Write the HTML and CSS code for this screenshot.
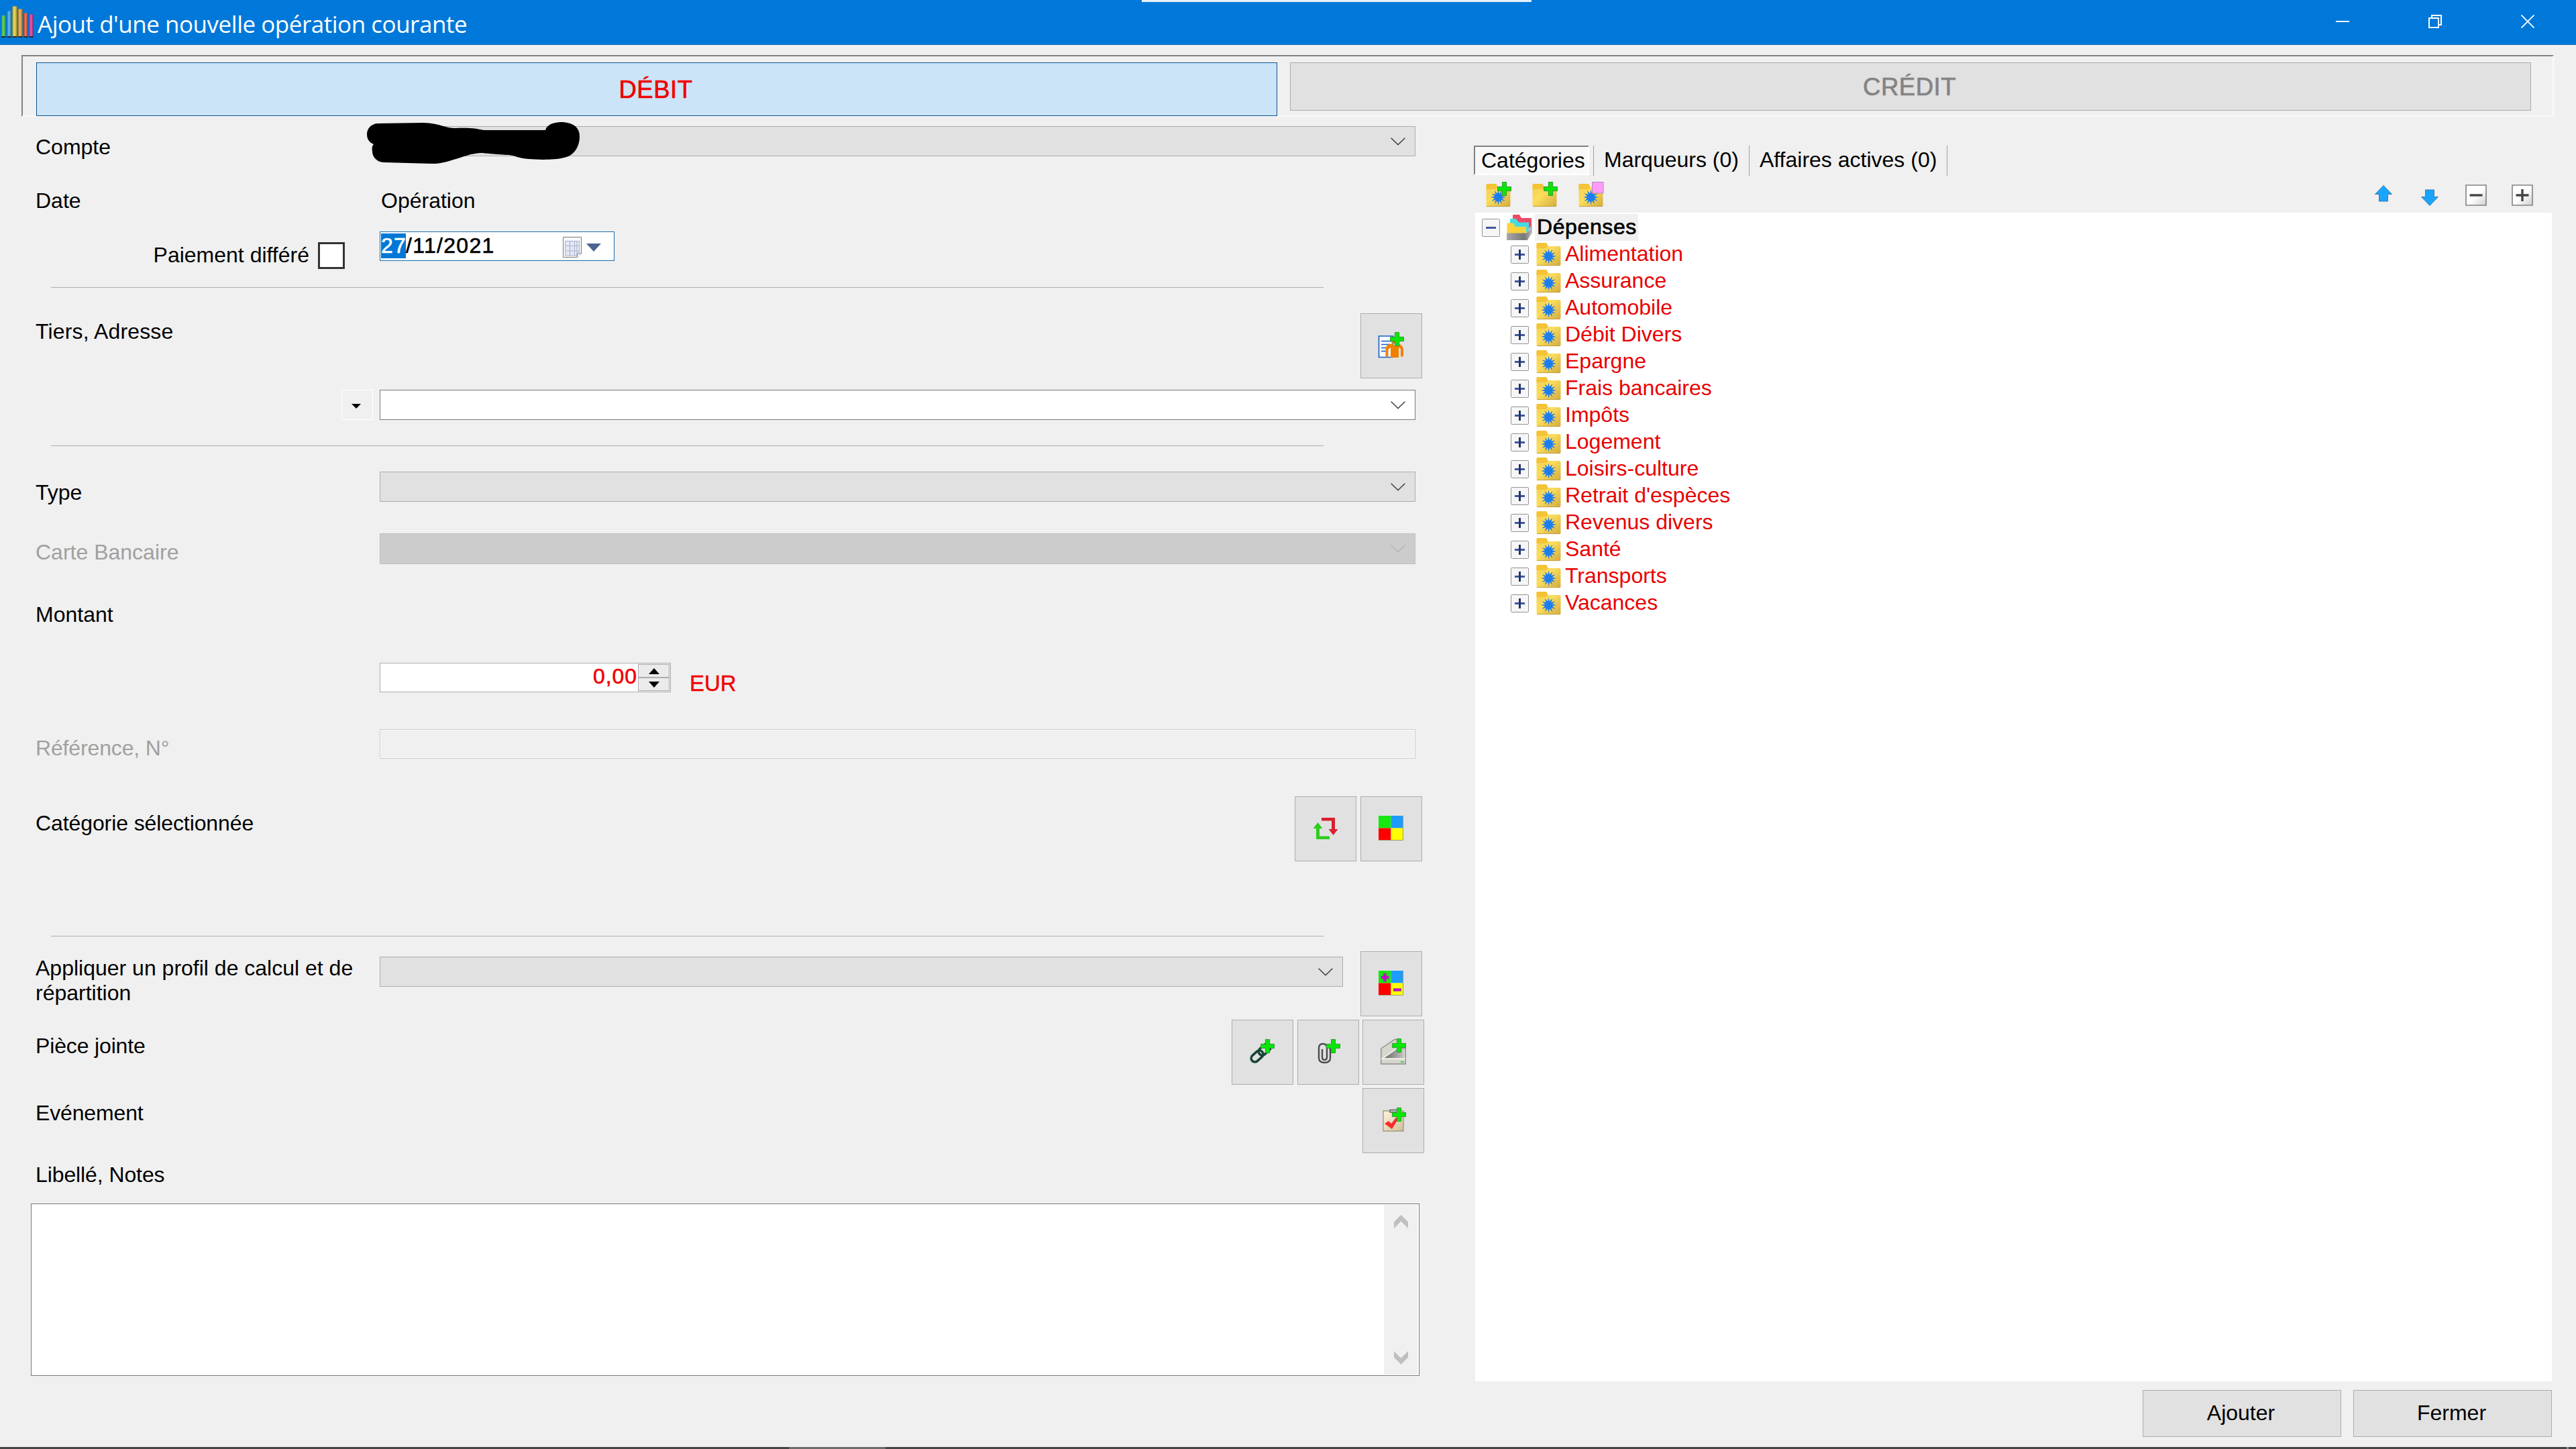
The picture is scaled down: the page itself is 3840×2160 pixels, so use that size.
FILE: index.html
```html
<!DOCTYPE html>
<html lang="fr">
<head>
    <meta charset="UTF-8">
    <meta name="viewport" content="width=device-width, initial-scale=1.0">
    <title>Ajout d'une nouvelle opération courante</title>
    <link rel="stylesheet" href="styles.css">
</head>
<body>
    <!-- Icônes réutilisées -->
    <svg class="defs" width="0" height="0">
        <defs>
            <linearGradient id="gFolder" x1="0" y1="0" x2="1" y2="1">
                <stop offset="0" stop-color="#f3cf52"/>
                <stop offset="0.45" stop-color="#fbdc5c"/>
                <stop offset="1" stop-color="#d2ab3f"/>
            </linearGradient>
            <linearGradient id="gBox" x1="0" y1="0" x2="1" y2="1">
                <stop offset="0.5" stop-color="#ffffff"/>
                <stop offset="1" stop-color="#cfcfcf"/>
            </linearGradient>
            <linearGradient id="gTray" x1="0" y1="0" x2="1" y2="0">
                <stop offset="0" stop-color="#a8a8a8"/>
                <stop offset="0.7" stop-color="#777777"/>
                <stop offset="1" stop-color="#b5b5b5"/>
            </linearGradient>
            <linearGradient id="gNote" x1="0" y1="0" x2="1" y2="1">
                <stop offset="0" stop-color="#fff3dc"/>
                <stop offset="1" stop-color="#cfc09c"/>
            </linearGradient>
            <linearGradient id="gScan" x1="0" y1="0" x2="1" y2="0">
                <stop offset="0" stop-color="#6a6864"/>
                <stop offset="1" stop-color="#c4c4c4"/>
            </linearGradient>
            <linearGradient id="gBar" x1="0" y1="0" x2="1" y2="0">
                <stop offset="0" stop-color="#000" stop-opacity="0.3"/>
                <stop offset="0.4" stop-color="#fff" stop-opacity="0.2"/>
                <stop offset="1" stop-color="#000" stop-opacity="0.4"/>
            </linearGradient>
        </defs>
        <symbol id="chevron" viewBox="0 0 22 12">
            <path d="M0.7 0.7 L11 10.7 L21.3 0.7" fill="none" stroke="currentColor" stroke-width="1.5"/>
        </symbol>
        <symbol id="star" viewBox="0 0 24 24">
            <path d="M12 0 L13.5 6.3 L18 1.6 L16.100 7.900 L22.4 6 L17.700 10.500 L24 12 L17.700 13.500 L22.4 18 L16.100 16.100 L18 22.4 L13.5 17.700 L12 24 L10.5 17.700 L6 22.4 L7.900 16.100 L1.6 18 L6.300 13.500 L0 12 L6.300 10.500 L1.6 6 L7.900 7.900 L6 1.6 L10.5 6.3 Z" fill="#1c7df0"/>
        </symbol>
        <symbol id="folder" viewBox="0 0 37 36">
            <path d="M0.5 3 Q0.5 1 2.5 1 H14 Q15.5 1 16 2.5 L17.5 6 H34.5 Q36.5 6 36.5 8 V33 Q36.5 35 34.5 35 H2.5 Q0.5 35 0.5 33 Z" fill="url(#gFolder)"/>
            <path d="M0.5 9 V3 Q0.5 1 2.5 1 H14 Q15.5 1 16 2.5 L17.5 6 L15 9 Z" fill="#f4c336"/>
            <path d="M1 34.6 H36" stroke="#c29c36" stroke-width="1"/>
        </symbol>
        <symbol id="folder-star" viewBox="0 0 37 36">
            <use href="#folder" width="37" height="36"/>
            <use href="#star" x="7" y="9.5" width="23" height="23"/>
        </symbol>
        <symbol id="plus-green" viewBox="0 0 21 21">
            <path d="M7.4 0.5 H13.6 V7.4 H20.5 V13.6 H13.6 V20.5 H7.4 V13.6 H0.5 V7.4 H7.4 Z" fill="#0ae60a" stroke="#2f9a2f" stroke-width="1"/>
        </symbol>
        <symbol id="squares" viewBox="0 0 37 37">
            <path fill="#17e80f" d="M0 0h18.5v18.5H0z"/>
            <path fill="#1e9bff" d="M18.5 0H36v18.5H18.5z"/>
            <path fill="#ff0000" d="M0 18.5h18.5V36H0z"/>
            <path fill="#ffff00" d="M18.5 18.5H36V36H18.5z"/>
            <path d="M0 36.5 H36.5 V0" fill="none" stroke="#9a9a78" stroke-width="1"/>
        </symbol>
        <symbol id="node-plus" viewBox="0 0 27 27">
            <rect x="0.5" y="0.5" width="26" height="26" rx="1" fill="#f6f6f6" stroke="#929292"/>
            <path d="M6 13.5 H21" stroke="#4059a0" stroke-width="3"/>
            <path d="M13.5 6 V21" stroke="#1f3668" stroke-width="3"/>
        </symbol>
        <symbol id="node-minus" viewBox="0 0 27 27">
            <rect x="0.5" y="0.5" width="26" height="26" rx="1" fill="#f6f6f6" stroke="#929292"/>
            <path d="M6 13.5 H21" stroke="#4059a0" stroke-width="3"/>
        </symbol>
    </svg>

    <div class="window">
        <header class="titlebar">
            <svg class="app-icon" width="50" height="50" viewBox="0 0 50 50">
                <path d="M2 15h7v31H2z" fill="#3cc442"/>
                <path d="M10.500 8.500h6.500v37.500h-6.500z" fill="#34a8ea"/>
                <path d="M18.500 1.500h7v44.500h-7z" fill="#ecd030"/>
                <path d="M27 5.500h6.500v40.500H27z" fill="#f8a024"/>
                <path d="M35.500 11.500H41.500v34.500h-6z" fill="#ee5230"/>
                <path d="M43.500 13.500h6v32.500h-6z" fill="#e0309c"/>
                <path d="M2 15h7v31H2z" fill="url(#gBar)"/>
                <path d="M10.500 8.500h6.500v37.500h-6.500z" fill="url(#gBar)"/>
                <path d="M18.500 1.500h7v44.500h-7z" fill="url(#gBar)"/>
                <path d="M27 5.500h6.500v40.500H27z" fill="url(#gBar)"/>
                <path d="M35.500 11.500H41.500v34.500h-6z" fill="url(#gBar)"/>
                <path d="M43.500 13.500h6v32.500h-6z" fill="url(#gBar)"/>
                <path d="M2 47h7M10.500 47h6.500M18.500 47h7M27 47h6.500M35.500 47h6M43.500 47h6" stroke="#2a2a2a" stroke-width="2"/>
            </svg>
            <h1 class="title">Ajout d'une nouvelle opération courante</h1>
            <span class="top-strip"></span>
            <div class="window-controls">
                <svg width="20" height="20" viewBox="0 0 20 20"><path d="M0 10h20" stroke="#fff" stroke-width="2"/></svg>
                <svg width="20" height="20" viewBox="0 0 20 20"><path d="M1 5h14v14H1z M5 5V1h14v14h-4" fill="none" stroke="#fff" stroke-width="2"/></svg>
                <svg width="20" height="20" viewBox="0 0 20 20"><path d="M0.500 0.500L19.500 19.500M19.500 0.500L0.500 19.500" stroke="#fff" stroke-width="1.800"/></svg>
            </div>
        </header>

        <nav class="mode">
            <button class="mode-btn debit">DÉBIT</button>
            <button class="mode-btn credit">CRÉDIT</button>
        </nav>

        <main class="content">
            <form class="form">
                <div class="row row-compte">
                    <label class="label">Compte</label>
                    <div class="combo">
                        <svg class="chevron"><use href="#chevron"/></svg>
                        <svg class="scribble" width="320" height="66" viewBox="545 180 320 66">
                            <path d="M547 200 C547 192 553 184 564 184 L631 183 C655 184 662 190 676 191 C700 190 708 191 721 194 L813 194 C816 184 828 182 839 182 C855 183 864 190 864 203 C864 220 855 232 841 235 C825 239 800 238 788 237 C773 236 768 232 759 231 C740 230 730 229 719 228 C702 228 688 235 676 238 C663 242 655 244 644 244 L571 242 C560 241 555 232 555 226 C554 220 555 217 557 215 C550 212 547 207 547 200 Z" fill="#000"/>
                        </svg>
                    </div>
                </div>

                <div class="row row-date">
                    <label class="label">Date</label>
                    <label class="label operation">Opération</label>
                </div>
                <div class="row row-differe">
                    <div class="differe">
                        <label class="label">Paiement différé</label>
                        <span class="checkbox"></span>
                    </div>
                    <div class="date-input">
                        <span class="selected">27</span><span>/11/2021</span>
                        <svg class="calendar" width="28" height="32" viewBox="0 0 28 32">
                            <path d="M0.500 0.500H27.500V25L21.500 30.500H0.500Z" fill="#f7f8fb" stroke="#7c7c80"/>
                            <path d="M3 6h22v19l-4 3H3z" fill="#e3e8f4"/>
                            <path d="M3.500 6.500h21v14.500h-21zM3.500 13.500h21M3.500 21v7H21V6.500M10.500 6.500V28M17.500 6.500V28M24.500 21v3" fill="none" stroke="#a9b3cc"/>
                            <path d="M21.500 30.500V25H27.500" fill="#fff" stroke="#7c7c80"/>
                        </svg>
                        <svg class="date-arrow" width="22" height="12" viewBox="0 0 22 12"><path d="M0 0H22L11 12Z" fill="#4d6290"/></svg>
                    </div>
                </div>
                <hr class="rule">

                <div class="row row-tiers">
                    <label class="label">Tiers, Adresse</label>
                    <div class="buttons inset">
                        <button type="button" class="icon-btn">
                            <svg width="40" height="40" viewBox="0 0 40 40">
                                <path d="M1.500 6h21v31.500h-21z" fill="#f8fbff" stroke="#1560c8" stroke-width="1.600"/>
                                <path d="M5 13.500h15M5 18.500h13M5 23.500h9M5 28.500h8" stroke="#1560c8" stroke-width="1.400"/>
                                <circle cx="24" cy="12" r="5" fill="#d97800"/>
                                <path d="M17 17.500h5l2.500 3 2.500-3h5q6 3 6 9v10h-4V25l-3-2v15H19V23l-3.500 3v10.500h-4V26q0-6 5.500-8.500z" fill="#f08000"/>
                                <use href="#plus-green" x="18" y="0" width="21" height="21"/>
                            </svg>
                        </button>
                    </div>
                </div>
                <div class="row row-tiers-select">
                    <span class="mini-drop"><svg width="14" height="7" viewBox="0 0 14 7"><path d="M0 0H14L7 7Z"/></svg></span>
                    <div class="combo editable"><svg class="chevron"><use href="#chevron"/></svg></div>
                </div>
                <hr class="rule">

                <div class="row row-type">
                    <label class="label">Type</label>
                    <div class="combo"><svg class="chevron"><use href="#chevron"/></svg></div>
                </div>
                <div class="row row-carte">
                    <label class="label disabled">Carte Bancaire</label>
                    <div class="combo disabled"><svg class="chevron"><use href="#chevron"/></svg></div>
                </div>
                <div class="row row-montant">
                    <label class="label">Montant</label>
                </div>
                <div class="row row-amount">
                    <div class="amount">
                        <div class="number">
                            <span class="value">0,00</span>
                            <div class="spinner">
                                <span><svg width="16" height="9" viewBox="0 0 16 9"><path d="M8 0L16 9H0Z"/></svg></span>
                                <span><svg width="16" height="9" viewBox="0 0 16 9"><path d="M8 9L16 0H0Z"/></svg></span>
                            </div>
                        </div>
                        <span class="currency">EUR</span>
                    </div>
                </div>
                <div class="row row-ref">
                    <label class="label disabled">Référence, N°</label>
                    <div class="text-disabled"></div>
                </div>
                <div class="row row-categorie">
                    <label class="label">Catégorie sélectionnée</label>
                    <div class="buttons inset">
                        <button type="button" class="icon-btn">
                            <svg width="38" height="34" viewBox="0 0 38 34">
                                <path d="M13 1H33V18H37.500L30.500 27L23.500 18H28V5.500H13Z" fill="#d9202e"/>
                                <path d="M25 33H5V17H0.500L7.500 8L14.500 17H10V28.500H25Z" fill="#2ecb1e"/>
                            </svg>
                        </button>
                        <button type="button" class="icon-btn"><svg width="37" height="37"><use href="#squares"/></svg></button>
                    </div>
                </div>
                <hr class="rule">

                <div class="row row-profil">
                    <label class="label">Appliquer un profil de calcul et de répartition</label>
                    <div class="profil">
                        <div class="combo short"><svg class="chevron"><use href="#chevron"/></svg></div>
                        <button type="button" class="icon-btn">
                            <svg width="37" height="37" viewBox="0 0 37 37">
                                <use href="#squares" width="37" height="37"/>
                                <path d="M3.500 10h12M9.500 3.500v13M22 28.500h12" stroke="#8a4a7c" stroke-width="4.600"/>
                                <path d="M4.500 10h10M9.500 4.500v11M23 28.500h10" stroke="#c800d8" stroke-width="3"/>
                            </svg>
                        </button>
                    </div>
                </div>
                <div class="row row-piece">
                    <label class="label">Pièce jointe</label>
                    <div class="buttons">
                        <button type="button" class="icon-btn">
                            <svg width="38" height="38" viewBox="0 0 38 38">
                                <g fill="none" stroke="#184438" stroke-width="3.600">
                                    <rect x="1" y="20" width="20" height="11" rx="5.500" transform="rotate(-42 11 25.500)"/>
                                    <rect x="12" y="10" width="20" height="11" rx="5.500" transform="rotate(-42 22 15.500)"/>
                                </g>
                                <use href="#plus-green" x="16" y="0" width="21" height="21"/>
                            </svg>
                        </button>
                        <button type="button" class="icon-btn">
                            <svg width="38" height="38" viewBox="0 0 38 38">
                                <path d="M10 16v12q0 4 3.500 4t3.500-4V14q0-6-6-6t-6 6v15q0 7 8.500 7t8.500-7V12" transform="translate(0 -1)" fill="none" stroke="#4c4c4e" stroke-width="2.400"/>
                                <use href="#plus-green" x="16" y="0" width="21" height="21"/>
                            </svg>
                        </button>
                        <button type="button" class="icon-btn last">
                            <svg width="38" height="39" viewBox="0 0 38 39">
                                <path d="M0.700 15L21 1.500L27 1.500V14.500H37.300V38H0.700Z" fill="#d6d6cc" stroke="#8d8d8d" stroke-width="1.400"/>
                                <path d="M6 29L25 15.500H34.500V29Z" fill="url(#gScan)"/>
                                <path d="M1 31L25 14" stroke="#f2f2ee" stroke-width="1.500"/>
                                <path d="M1 30.500H37" stroke="#eeeee8" stroke-width="2"/>
                                <path d="M30 35h4.500" stroke="#2fd93c" stroke-width="2"/>
                                <use href="#plus-green" x="17" y="0" width="21" height="21"/>
                            </svg>
                        </button>
                    </div>
                </div>
                <div class="row row-evenement">
                    <label class="label">Evénement</label>
                    <div class="buttons">
                        <button type="button" class="icon-btn">
                            <svg width="38" height="38" viewBox="0 0 38 38">
                                <path d="M4 5h30v30H4z" fill="url(#gNote)" stroke="#a39a7e" stroke-width="1.400"/>
                                <path d="M14 3.500h12v3.500H14z" fill="#c9ccd2" stroke="#5c5f66" stroke-width="1.400"/>
                                <path d="M6 24l6-4 4 4 7-9 5-1-11 18z" fill="#fb2a2a"/>
                                <use href="#plus-green" x="17" y="0" width="21" height="21"/>
                            </svg>
                        </button>
                    </div>
                </div>
                <label class="label notes-label">Libellé, Notes</label>
                <div class="notes">
                    <div class="scrollbar">
                        <svg width="21" height="20" viewBox="0 0 21 20"><path d="M10.500 0L21 10.500V20L10.500 9.500L0 20V10.500Z" fill="#bfbfbf"/></svg>
                        <svg width="21" height="20" viewBox="0 0 21 20"><path d="M10.500 20L21 9.500V0L10.500 10.500L0 0V9.500Z" fill="#bfbfbf"/></svg>
                    </div>
                </div>
            </form>

            <aside class="side">
                <div class="tabs">
                    <span class="tab active">Catégories</span>
                    <span class="tab">Marqueurs (0)</span>
                    <span class="tab">Affaires actives (0)</span>
                </div>
                <div class="toolbar">
                    <svg width="39" height="39" viewBox="0 0 39 39">
                        <use href="#folder-star" x="0" y="2" width="37" height="36"/>
                        <use href="#plus-green" x="17" y="0" width="21" height="21"/>
                    </svg>
                    <svg width="39" height="39" viewBox="0 0 39 39">
                        <use href="#folder" x="0" y="2" width="37" height="36"/>
                        <use href="#plus-green" x="17" y="0" width="21" height="21"/>
                    </svg>
                    <svg width="39" height="39" viewBox="0 0 39 39">
                        <use href="#folder-star" x="0" y="2" width="37" height="36"/>
                        <path d="M20.500 0.500h16.500v16.500H20.500z" fill="#ff9bfb" stroke="#b684b4"/>
                    </svg>
                    <div class="toolbar-right">
                        <svg width="32" height="32" viewBox="0 0 32 32"><path d="M16 1.500L28.500 14.500H22.500V25H9.500V14.500H3.500Z" fill="#1ba4fb" stroke="#3a7fae"/></svg>
                        <svg width="32" height="32" viewBox="0 0 32 32"><path d="M16 31.500L28.500 18.500H22.500V8H9.500V18.500H3.500Z" fill="#1ba4fb" stroke="#3a7fae"/></svg>
                        <svg width="32" height="32" viewBox="0 0 32 32"><path d="M1 1h30v30H1z" fill="url(#gBox)" stroke="#828282" stroke-width="1.600"/><path d="M6.500 16h19" stroke="#444" stroke-width="3.400"/></svg>
                        <svg width="32" height="32" viewBox="0 0 32 32"><path d="M1 1h30v30H1z" fill="url(#gBox)" stroke="#828282" stroke-width="1.600"/><path d="M6.500 16h19M16 7v18" stroke="#444" stroke-width="3.400"/></svg>
                    </div>
                </div>
                <div class="tree">
                    <div class="node root">
                        <svg class="toggle"><use href="#node-minus"/></svg>
                        <svg class="root-icon" width="38" height="38" viewBox="0 0 38 38">
                            <path d="M9 5V1Q9 0 10 0H19L22 5H37V20H14Z" fill="#ee4a68"/>
                            <path d="M5 13V7Q5 6 6 6H14L18 11.500H33V26H5Z" fill="#45dbe2"/>
                            <path d="M29 28L38 14V27L31 38H26Z" fill="#b9b9b9"/>
                            <path d="M0.500 28V14Q0.500 12.500 2 12.500H10L13 18H29V28Z" fill="#fbd23c"/>
                            <path d="M0 27.500H29L37.500 22L31 38H0Z" fill="url(#gTray)"/>
                        </svg>
                        <span class="name">Dépenses</span>
                    </div>
                    <div class="node"><svg class="toggle"><use href="#node-plus"/></svg><svg class="folder"><use href="#folder-star"/></svg><span class="name">Alimentation</span></div>
                    <div class="node"><svg class="toggle"><use href="#node-plus"/></svg><svg class="folder"><use href="#folder-star"/></svg><span class="name">Assurance</span></div>
                    <div class="node"><svg class="toggle"><use href="#node-plus"/></svg><svg class="folder"><use href="#folder-star"/></svg><span class="name">Automobile</span></div>
                    <div class="node"><svg class="toggle"><use href="#node-plus"/></svg><svg class="folder"><use href="#folder-star"/></svg><span class="name">Débit Divers</span></div>
                    <div class="node"><svg class="toggle"><use href="#node-plus"/></svg><svg class="folder"><use href="#folder-star"/></svg><span class="name">Epargne</span></div>
                    <div class="node"><svg class="toggle"><use href="#node-plus"/></svg><svg class="folder"><use href="#folder-star"/></svg><span class="name">Frais bancaires</span></div>
                    <div class="node"><svg class="toggle"><use href="#node-plus"/></svg><svg class="folder"><use href="#folder-star"/></svg><span class="name">Impôts</span></div>
                    <div class="node"><svg class="toggle"><use href="#node-plus"/></svg><svg class="folder"><use href="#folder-star"/></svg><span class="name">Logement</span></div>
                    <div class="node"><svg class="toggle"><use href="#node-plus"/></svg><svg class="folder"><use href="#folder-star"/></svg><span class="name">Loisirs-culture</span></div>
                    <div class="node"><svg class="toggle"><use href="#node-plus"/></svg><svg class="folder"><use href="#folder-star"/></svg><span class="name">Retrait d'espèces</span></div>
                    <div class="node"><svg class="toggle"><use href="#node-plus"/></svg><svg class="folder"><use href="#folder-star"/></svg><span class="name">Revenus divers</span></div>
                    <div class="node"><svg class="toggle"><use href="#node-plus"/></svg><svg class="folder"><use href="#folder-star"/></svg><span class="name">Santé</span></div>
                    <div class="node"><svg class="toggle"><use href="#node-plus"/></svg><svg class="folder"><use href="#folder-star"/></svg><span class="name">Transports</span></div>
                    <div class="node"><svg class="toggle"><use href="#node-plus"/></svg><svg class="folder"><use href="#folder-star"/></svg><span class="name">Vacances</span></div>
                </div>
                <div class="actions">
                    <button class="action-btn">Ajouter</button>
                    <button class="action-btn">Fermer</button>
                </div>
            </aside>
        </main>

        <footer class="taskbar"><span class="task"></span><span class="tick"></span></footer>
    </div>
</body>
</html>
```

FILE: styles.css
```css
* {
    box-sizing: border-box;
}

body {
    margin: 0;
    background-color: #f0f0f0;
    color: #000;
    font-family: "Liberation Sans", Arial, sans-serif;
    font-size: 32px;
    line-height: 37px;
}

button {
    font-family: inherit;
    font-size: inherit;
    line-height: inherit;
    color: inherit;
    padding: 0;
    border: 1px solid #adadad;
    border-radius: 0;
    background-color: #e1e1e1;
}

svg {
    display: block;
    flex: none;
}

.defs {
    position: absolute;
}

.window {
    width: 3840px;
    height: 2160px;
    display: flex;
    flex-direction: column;
    overflow: hidden;
}

/* Barre de titre */
.titlebar {
    position: relative;
    display: flex;
    align-items: center;
    height: 67px;
    flex: none;
    background-color: #0078d9;
    border-bottom: 1px solid #196eb4;
    color: #fff;
}

.app-icon {
    margin-top: -1px;
}

.title {
    margin: 5px 0 0 6px;
    font-family: "Open Sans", "Noto Sans", sans-serif;
    font-size: 35px;
    font-weight: 400;
    line-height: 48px;
    letter-spacing: -0.480px;
    white-space: nowrap;
}

.top-strip {
    position: absolute;
    top: 0;
    left: 1702px;
    width: 581px;
    height: 3px;
    background-color: #e8f1f8;
}

.window-controls {
    display: flex;
    gap: 118px;
    margin: -3px 62px 0 auto;
}

/* Débit / Crédit */
.mode {
    display: flex;
    align-items: flex-start;
    gap: 19px;
    flex: none;
    height: 92px;
    margin: 15px 33px 0 32px;
    padding: 9px 0 0 20px;
    border: 2px solid;
    border-color: #838383 #fafafa #fafafa #838383;
}

.mode-btn {
    width: 1850px;
    height: 74px;
    padding-right: 3px;
    font-size: 36.500px;
    letter-spacing: 0.500px;
    -webkit-text-stroke: 0.700px currentColor;
}

.mode-btn.debit {
    height: 80px;
    border-color: #0a5290;
    background-color: #cce4f7;
    color: #f00000;
    margin-bottom: -4px;
}

.mode-btn.credit {
    height: 72px;
    color: #838383;
}

.content {
    display: flex;
    flex: 1;
    min-height: 0;
}

/* Formulaire */
.form {
    width: 2197px;
    flex: none;
    padding-left: 53px;
}

.row {
    display: grid;
    grid-template-columns: 513px 1557px;
    align-items: start;
}

.label {
    display: block;
}

.label.disabled {
    color: #a0a0a0;
}

.rule {
    width: 1897px;
    height: 1px;
    margin: 0 0 0 23px;
    border: none;
    background-color: #adadad;
}

.combo {
    position: relative;
    display: flex;
    align-items: center;
    justify-content: flex-end;
    width: 1544px;
    height: 45px;
    padding-right: 14px;
    border: 1px solid #adadad;
    background-color: #e1e1e1;
    color: #3c3c3c;
}

.combo.editable {
    border-color: #7a7a7a;
    background-color: #fff;
}

.combo.disabled {
    height: 46px;
    margin-top: 1px;
    border-color: #bfbfbf;
    background-color: #cccccc;
    color: #b4b4b4;
}

.combo.short {
    width: 1436px;
}

.chevron {
    width: 22px;
    height: 12px;
}

/* Trait qui masque le compte */
.scribble {
    position: absolute;
    left: -22px;
    top: -9px;
}

.row-compte {
    height: 97px;
}

.row-compte .label {
    margin-top: 27px;
}

.row-compte .combo {
    margin-top: 14px;
}

.row-date {
    height: 74px;
    padding-top: 10px;
}

.operation {
    padding-left: 2px;
}

.row-differe {
    height: 83px;
}

.differe {
    display: flex;
    justify-content: flex-end;
    gap: 13px;
    padding: 16px 52px 0 0;
}

.differe .label {
    margin-top: 1px;
}

.checkbox {
    width: 40px;
    height: 40px;
    border: 3px solid #333;
    background-color: #fff;
}

.date-input {
    display: flex;
    align-items: flex-start;
    width: 350px;
    height: 44px;
    padding: 2px 0 0 1px;
    border: 1px solid #1a6fb0;
    background-color: #fff;
    letter-spacing: 1.300px;
    -webkit-text-stroke: 0.600px currentColor;
}

.selected {
    background-color: #0078d7;
    color: #fff;
    height: 37px;
    width: 37px;
}

.calendar {
    margin: 5px 7px 0 auto;
}

.date-arrow {
    margin: 15px 19px 0 0;
}

.row-tiers {
    height: 152px;
}

.row-tiers .label {
    margin-top: 47px;
    letter-spacing: 0.150px;
}

.row-tiers .buttons {
    margin-top: 38px;
}

.row-tiers-select {
    height: 83px;
}

.mini-drop {
    display: flex;
    align-items: center;
    justify-content: center;
    justify-self: end;
    width: 47px;
    height: 45px;
    margin-right: 10px;
    padding: 4px 4px 0 0;
    border: 1px solid #fff;
}

.row-type {
    height: 129px;
}

.row-type .label {
    margin-top: 51px;
}

.row-type .combo {
    margin-top: 38px;
}

.row-carte {
    height: 104px;
}

.row-carte .label {
    margin-top: 11px;
}

.row-montant {
    height: 90px;
}

/* Montant */
.row-amount {
    height: 99px;
}

.amount {
    grid-column: 2;
    display: flex;
    color: #f00000;
}

.number {
    display: flex;
    justify-content: flex-end;
    width: 434px;
    height: 44px;
    border: 1px solid #adadad;
    background-color: #fff;
}

.value {
    padding: 1px 1px 0 0;
    letter-spacing: 0.900px;
    -webkit-text-stroke: 0.600px currentColor;
}

.spinner {
    width: 48px;
    padding: 1px 1px 1px 0;
    display: flex;
    flex-direction: column;
    background-color: #f0f0f0;
}

.spinner span {
    display: flex;
    align-items: center;
    justify-content: center;
    flex: 1;
    border: 1px solid #adadad;
    background-color: #ebebeb;
}

.currency {
    margin: 12px 0 0 28px;
    font-size: 33px;
    -webkit-text-stroke: 0.400px currentColor;
}

.row-ref {
    height: 100px;
}

.row-ref .label {
    margin-top: 10px;
    letter-spacing: -0.150px;
}

.text-disabled {
    width: 1544px;
    height: 44px;
    border: 1px solid #cccccc;
    box-shadow: inset 0 0 0 1px #fcfcfc;
}

.row-categorie {
    height: 208px;
}

.row-categorie .label {
    margin-top: 22px;
    letter-spacing: -0.100px;
}

.buttons {
    display: flex;
    justify-content: flex-end;
    gap: 6px;
}

.buttons.inset {
    padding-right: 3px;
}

.icon-btn {
    display: flex;
    align-items: center;
    justify-content: center;
    width: 92px;
    height: 97px;
    padding: 0 1px 2px 0;
}

.icon-btn.last {
    margin-left: -1px;
}

.row-profil {
    height: 124px;
}

.row-profil .label {
    margin-top: 29px;
}

.profil {
    display: flex;
    gap: 26px;
}

.profil .combo {
    margin-top: 30px;
}

.profil .icon-btn {
    margin-top: 22px;
}

.row-piece {
    height: 102px;
}

.row-piece .label {
    margin-top: 21px;
    letter-spacing: -0.150px;
}

.row-evenement {
    height: 111px;
}

.row-evenement .label {
    margin-top: 19px;
    letter-spacing: -0.150px;
}

.notes-label {
    height: 61px;
    letter-spacing: -0.100px;
}

.notes {
    display: flex;
    justify-content: flex-end;
    width: 2070px;
    height: 257px;
    margin-left: -7px;
    padding: 1px 2px 1px 1px;
    border: 1px solid #7a7a7a;
    background-color: #fff;
}

.scrollbar {
    display: flex;
    flex-direction: column;
    align-items: center;
    justify-content: space-between;
    width: 50px;
    padding: 15px 0;
    background-color: #f0f0f0;
}

/* Catégories */
.side {
    width: 1607px;
    display: flex;
    flex-direction: column;
}

.tabs {
    display: flex;
    height: 88px;
    padding-top: 43px;
}

.tab {
    height: 45px;
    padding: 3px 15px 0;
    border-right: 1px solid #a0a0a0;
    white-space: nowrap;
}

.tab.active {
    position: relative;
    width: 179px;
    padding: 4px 0 0 11px;
}

.tab.active::before {
    content: "";
    position: absolute;
    inset: 0 6px 1px 0;
    z-index: -1;
    border: 2px solid;
    border-color: #808080 #fff #fff #808080;
    background-color: #f8f8f8;
}

.toolbar {
    display: flex;
    gap: 30px;
    height: 55px;
    padding: 9px 28px 0 18px;
}

.toolbar-right {
    display: flex;
    gap: 37px;
    margin: 4px 0 0 auto;
}

.tree {
    height: 1742px;
    margin: 0 0 0 2px;
    padding-top: 2px;
    background-color: #fff;
}

.node {
    display: flex;
    align-items: center;
    height: 40px;
    padding-left: 53px;
    color: #e80000;
}

.node .name {
    margin-top: -2px;
}

.node.root {
    padding-left: 10px;
    color: #000;
}

.toggle {
    width: 27px;
    height: 27px;
}

.folder {
    width: 37px;
    height: 36px;
    margin: 0 6px 0 11px;
}

.root-icon {
    margin: 0 4px 0 10px;
}

.root .name {
    height: 40px;
    width: 154px;
    margin-top: 0;
    padding: 1px 0 0 3px;
    background-color: #f0f0f0;
    letter-spacing: 0.600px;
    -webkit-text-stroke: 0.700px currentColor;
}

.actions {
    display: flex;
    justify-content: flex-end;
    gap: 18px;
    margin-top: 13px;
}

.action-btn {
    width: 296px;
    height: 70px;
    padding: 0 3px 2px 0;
}

.taskbar {
    display: flex;
    height: 3px;
    flex: none;
    background-color: #444444;
}

.task {
    width: 144px;
    margin-left: 1176px;
    background-color: #6e6b6b;
}

.tick {
    width: 3px;
    margin-left: 2506px;
    background-color: #8c8c8c;
}
```
